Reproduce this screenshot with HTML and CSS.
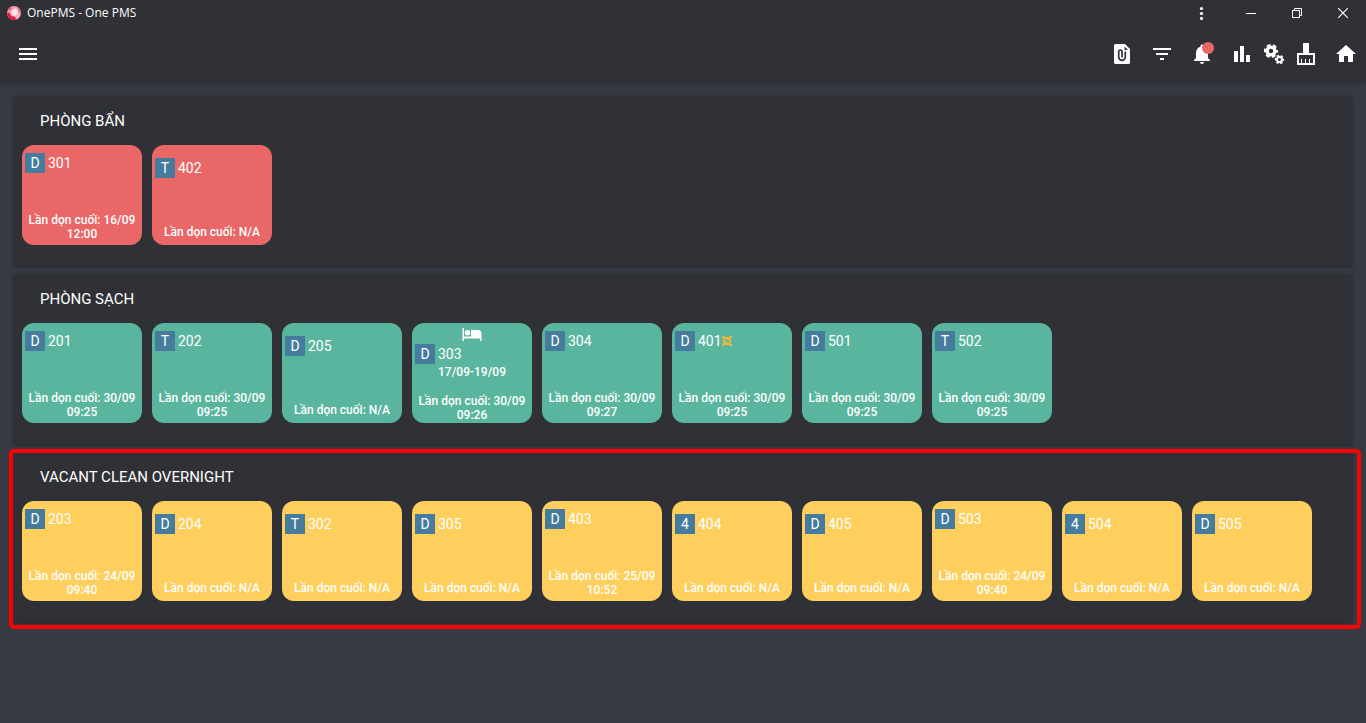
FILE: index.html
```html
<!DOCTYPE html>
<html lang="vi">
<head>
<meta charset="utf-8">
<meta name="viewport" content="width=device-width, initial-scale=1">
<title>OnePMS - One PMS</title>
<link rel="stylesheet" href="styles.css">
</head>
<body>
<header class="header">
  <div class="titlebar">
    <svg class="app-icon" viewBox="0 0 14 14" aria-hidden="true"><circle cx="7" cy="7" r="7" fill="#f79db2"/><path d="M0 7l2.500-.5L4 10l4 1 1 2.700A7 7 0 0 1 0 7z" fill="#e5193c"/><path d="M3 1.500l2 .5-2 2.500-1.500-.5zM11 2l2.500 4-2 .5z" fill="#e8506e"/><path d="M4.500 4l4-1.500 3 2.500-1 4-4 1-2.500-2.500z" fill="#fde4ea"/><path d="M10 10l3-1-2.500 3.500z" fill="#fbc3d0"/></svg>
    <span class="app-name">OnePMS - One PMS</span>
    <button class="win-btn win-more" type="button" aria-label="More"><svg width="14" height="14" viewBox="0 0 14 14"><g fill="#fff"><circle cx="7.500" cy="2.500" r="1.600"/><circle cx="7.500" cy="7.500" r="1.600"/><circle cx="7.500" cy="12.400" r="1.600"/></g></svg></button>
    <button class="win-btn" type="button" aria-label="Minimize"><svg width="10" height="10" viewBox="0 0 10 10"><path d="M0 5.500h10" stroke="#fff"/></svg></button>
    <button class="win-btn" type="button" aria-label="Restore"><svg width="10" height="10" viewBox="0 0 10 10"><path d="M.5 2.500h7v7h-7zM2.500 2.500v-2h7v7h-2" fill="none" stroke="#fff"/></svg></button>
    <button class="win-btn" type="button" aria-label="Close"><svg width="10" height="10" viewBox="0 0 10 10"><path d="M0 0l10 10M10 0L0 10" stroke="#fff" stroke-width="1.100"/></svg></button>
  </div>
  <nav class="toolbar">
    <button class="tool" type="button" aria-label="Menu"><svg width="24" height="24" viewBox="0 0 24 24"><path d="M3 18h18v-2H3zm0-5h18v-2H3zm0-7v2h18V6z" fill="#fff"/></svg></button>
    <div class="tools">
      <button class="tool" type="button" aria-label="Documents"><svg width="24" height="24" viewBox="0 0 24 24"><path d="M5.500 2H15l5 5v13.500a1.500 1.500 0 0 1-1.500 1.500h-13A1.500 1.500 0 0 1 4 20.500v-17A1.500 1.500 0 0 1 5.500 2z" fill="#fff"/><path d="M14.500 4.500l3.500 3.500h-3.500z" fill="#303136"/><path d="M15.300 9.500v5.500a3.300 3.300 0 0 1-6.600 0V9.700a1.700 1.700 0 0 1 3.400 0v5.800" fill="none" stroke="#303136" stroke-width="1.700"/></svg></button>
      <button class="tool" type="button" aria-label="Filter"><svg width="24" height="24" viewBox="0 0 24 24"><path d="M10 18h4v-2h-4zM3 6v2h18V6zm3 7h12v-2H6z" fill="#fff"/></svg></button>
      <button class="tool tool--alert" type="button" aria-label="Notifications"><svg width="24" height="24" viewBox="0 0 24 24"><path d="M12 22c1.100 0 2-.9 2-2h-4c0 1.100.89 2 2 2zm6-6v-5c0-3.070-1.640-5.640-4.500-6.320V4c0-.83-.67-1.500-1.500-1.500s-1.500.67-1.500 1.500v.68C7.630 5.360 6 7.920 6 11v5l-2 2v1h16v-1z" fill="#fff"/></svg><span class="dot"></span></button>
      <button class="tool tool--slim" type="button" aria-label="Statistics"><svg width="24" height="24" viewBox="0 0 24 24"><path d="M4 9h4v11H4zm12 4h4v7h-4zm-6-9h4v16h-4z" fill="#fff"/></svg></button>
      <button class="tool tool--slim" type="button" aria-label="Settings"><svg width="24" height="24" viewBox="0 0 24 24"><g fill="none" stroke="#fff"><circle cx="9" cy="9" r="3.900" stroke-width="3.400"/><circle cx="9" cy="9" r="6" stroke-width="2.200" stroke-dasharray="3.740 2.540" stroke-dashoffset="1.870"/><circle cx="17.500" cy="17.500" r="2.500" stroke-width="2"/><circle cx="17.500" cy="17.500" r="3.900" stroke-width="1.600" stroke-dasharray="2.400 1.680" stroke-dashoffset="1.200"/></g></svg></button>
      <button class="tool tool--slim" type="button" aria-label="Cleaning"><svg width="24" height="24" viewBox="0 0 24 24"><path d="M9 1h6v10h6v12H3V11h6zM5 13v8h2v-4h1v4h3v-4h1v4h3v-4h1v4h3v-8z" fill="#fff" fill-rule="evenodd"/></svg></button>
      <button class="tool" type="button" aria-label="Home"><svg width="24" height="24" viewBox="0 0 24 24"><path d="M10 20v-6h4v6h5v-8h3L12 3 2 12h3v8z" fill="#fff"/></svg></button>
    </div>
  </nav>
</header>
<main class="board">
  <section class="panel panel--dirty">
    <h2 class="panel-title">PHÒNG BẨN</h2>
    <div class="rooms">
      <article class="room"><div class="room-head"><span class="type">D</span><span>301</span></div><p class="note">Lần dọn cuối: 16/09 12:00</p></article>
      <article class="room room--new"><div class="room-head"><span class="type">T</span><span>402</span></div><p class="note">Lần dọn cuối: N/A</p></article>
    </div>
  </section>
  <section class="panel panel--clean">
    <h2 class="panel-title">PHÒNG SẠCH</h2>
    <div class="rooms">
      <article class="room"><div class="room-head"><span class="type">D</span><span>201</span></div><p class="note">Lần dọn cuối: 30/09 09:25</p></article>
      <article class="room"><div class="room-head"><span class="type">T</span><span>202</span></div><p class="note">Lần dọn cuối: 30/09 09:25</p></article>
      <article class="room room--new"><div class="room-head"><span class="type">D</span><span>205</span></div><p class="note">Lần dọn cuối: N/A</p></article>
      <article class="room room--busy"><svg class="bed" width="20" height="14" viewBox="0 0 20 14" aria-hidden="true"><path d="M.5 0h1.500v8.500h7V2H16a3.500 3.500 0 0 1 3.500 3.500V13H18v-2.500H2V13H.5z" fill="#fff"/><circle cx="5.500" cy="4.800" r="2.700" fill="#fff"/></svg><div class="room-head"><span class="type">D</span><span>303</span></div><p class="stay">17/09-19/09</p><p class="note">Lần dọn cuối: 30/09 09:26</p></article>
      <article class="room"><div class="room-head"><span class="type">D</span><span>304</span></div><p class="note">Lần dọn cuối: 30/09 09:27</p></article>
      <article class="room"><div class="room-head"><span class="type">D</span><span>401</span><svg class="mark" width="10" height="10" viewBox="0 0 10 10" aria-hidden="true"><g fill="none" stroke="#e9b93f"><rect x="2" y="2" width="6" height="6" rx="1" stroke-width="1.800"/><rect x="4" y="3.500" width="2" height="3" stroke-opacity=".7"/></g><path d="M0 0h2.500v2H0zM7.500 0H10v2H7.500zM0 8h2.500v2H0zM7.500 8H10v2H7.500z" fill="#e9b93f"/></svg></div><p class="note">Lần dọn cuối: 30/09 09:25</p></article>
      <article class="room"><div class="room-head"><span class="type">D</span><span>501</span></div><p class="note">Lần dọn cuối: 30/09 09:25</p></article>
      <article class="room"><div class="room-head"><span class="type">T</span><span>502</span></div><p class="note">Lần dọn cuối: 30/09 09:25</p></article>
    </div>
  </section>
  <section class="panel panel--vacant">
    <h2 class="panel-title">VACANT CLEAN OVERNIGHT</h2>
    <div class="rooms">
      <article class="room"><div class="room-head"><span class="type">D</span><span>203</span></div><p class="note">Lần dọn cuối: 24/09 09:40</p></article>
      <article class="room room--new"><div class="room-head"><span class="type">D</span><span>204</span></div><p class="note">Lần dọn cuối: N/A</p></article>
      <article class="room room--new"><div class="room-head"><span class="type">T</span><span>302</span></div><p class="note">Lần dọn cuối: N/A</p></article>
      <article class="room room--new"><div class="room-head"><span class="type">D</span><span>305</span></div><p class="note">Lần dọn cuối: N/A</p></article>
      <article class="room"><div class="room-head"><span class="type">D</span><span>403</span></div><p class="note">Lần dọn cuối: 25/09 10:52</p></article>
      <article class="room room--new"><div class="room-head"><span class="type">4</span><span>404</span></div><p class="note">Lần dọn cuối: N/A</p></article>
      <article class="room room--new"><div class="room-head"><span class="type">D</span><span>405</span></div><p class="note">Lần dọn cuối: N/A</p></article>
      <article class="room"><div class="room-head"><span class="type">D</span><span>503</span></div><p class="note">Lần dọn cuối: 24/09 09:40</p></article>
      <article class="room room--new"><div class="room-head"><span class="type">4</span><span>504</span></div><p class="note">Lần dọn cuối: N/A</p></article>
      <article class="room room--new"><div class="room-head"><span class="type">D</span><span>505</span></div><p class="note">Lần dọn cuối: N/A</p></article>
    </div>
    <div class="highlight"></div>
  </section>
</main>
</body>
</html>
```
FILE: styles.css
```css
* { box-sizing: border-box; }
body { margin: 0; min-height: 100vh; background: #373a42; color: #fff; font-family: Roboto, "Noto Sans", sans-serif; }
button { padding: 0; border: 0; background: none; color: inherit; }
svg { display: block; flex: none; }

.header { background: #303136; box-shadow: 0 1px 4px rgba(0, 0, 0, .3); }
.titlebar { display: flex; align-items: center; height: 26px; padding-left: 7px; font: 12px/16px "Open Sans", sans-serif; }
.app-icon { width: 14px; height: 14px; margin-right: 6px; }
.app-name { flex: 1; }
.win-btn { display: flex; align-items: center; justify-content: center; width: 46px; height: 26px; }
.win-more { width: 54px; }
.toolbar { display: flex; align-items: center; justify-content: space-between; height: 56px; padding-left: 8px; }
.tools { display: flex; align-items: center; }
.tool { position: relative; display: flex; align-items: center; justify-content: center; width: 40px; height: 40px; }
.tool--slim { width: 32px; }
.tool--alert { margin-right: 4px; }
.tool--slim:nth-last-child(2) { margin-right: 4px; }
.dot { position: absolute; top: 8px; right: 8px; width: 12px; height: 12px; border-radius: 50%; background: #e96767; }

.board { display: flex; flex-direction: column; gap: 8px; padding: 14px; }
.panel { position: relative; padding: 15px 8px 21px; background: #303136; box-shadow: 0 1px 3px rgba(0, 0, 0, .4); }
.panel-title { margin: 0 0 14px 18px; font-size: 15px; line-height: 20px; font-weight: 400; }
.rooms { display: flex; flex-wrap: wrap; gap: 10px; }
.room { display: flex; flex-direction: column; width: 120px; height: 100px; padding: 8px 3px 4px; border-radius: 12px; }
.room--new { padding-top: 13px; padding-bottom: 6px; }
.room--busy { padding-top: 5px; padding-bottom: 1px; }
.panel--dirty .room { background: #e96767; }
.panel--clean .room { background: #5ab59e; }
.panel--vacant .room { background: #fecf5d; }
.room-head { display: flex; align-items: center; font-size: 14px; line-height: 20px; font-weight: 400; }
.type { width: 20px; height: 20px; margin-right: 3px; background: #457b9d; text-align: center; }
.bed { align-self: center; margin-bottom: 2px; }
.stay, .note { margin: 0; font-size: 12px; line-height: 14px; font-weight: 500; text-align: center; }
.stay { margin-top: 1px; }
.note { margin-top: auto; }
.highlight { position: absolute; inset: -3px -9px -7px -5px; border: 4px solid #f00; border-radius: 5px; pointer-events: none; }
```
